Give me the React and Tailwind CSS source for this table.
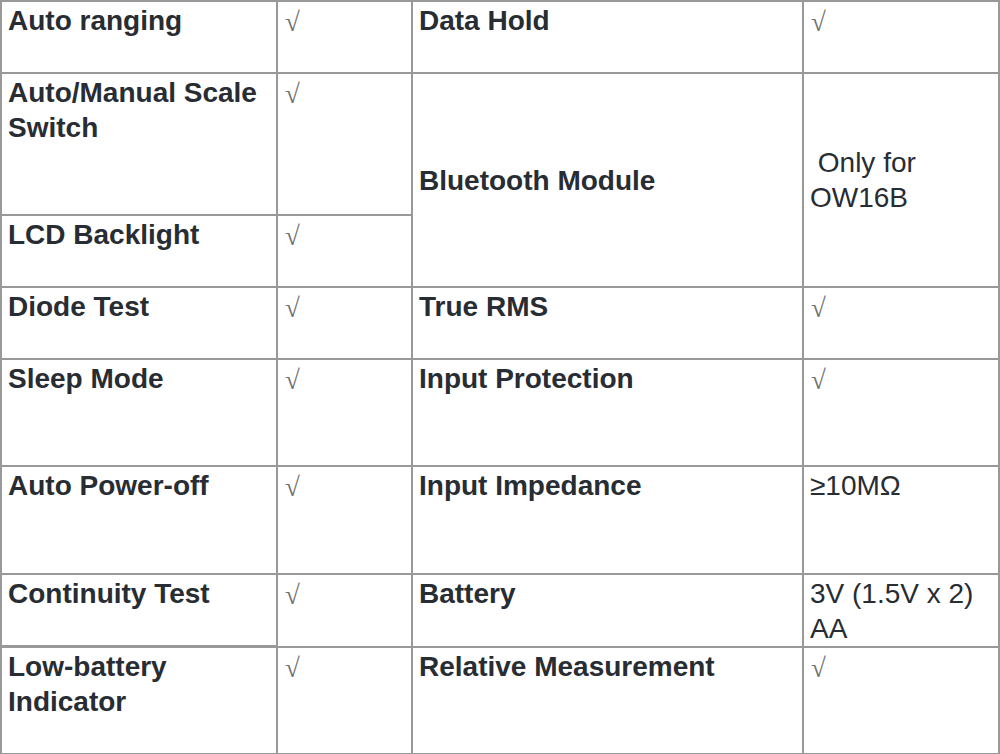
import React from 'react';

const rows = [
    { a: 'Auto ranging', b: '√', c: 'Data Hold', d: '√', h: 'h-[70px]' },
    { a: 'Auto/Manual Scale Switch', b: '√', h: 'h-[140px]' },
    { a: 'LCD Backlight', b: '√', h: 'h-[70px]' },
    { a: 'Diode Test', b: '√', c: 'True RMS', d: '√', h: 'h-[70px]' },
    { a: 'Sleep Mode', b: '√', c: 'Input Protection', d: '√', h: 'h-[105px]' },
    { a: 'Auto Power-off', b: '√', c: 'Input Impedance', d: '≥10MΩ', h: 'h-[106px]' },
    { a: 'Continuity Test', b: '√', c: 'Battery', d: '3V (1.5V x 2) AA', h: 'h-[70px]' },
    { a: 'Low-battery Indicator', b: '√', c: 'Relative Measurement', d: '√', h: 'h-[105px]' },
];

const Label = ({ children }) => (
    <div className="bg-white pl-[6px] pr-2 pt-[1px] font-bold">{children}</div>
);

const Value = ({ children }) => {
    if (children === '√') {
        return (
            <div className="bg-white pl-[7px] pt-[2px]">
                <span
                    className="text-[27px] leading-[30px] text-[#707070]"
                    style={{ fontFamily: '"Liberation Serif", serif' }}
                >
                    √
                </span>
            </div>
        );
    }
    return <div className="bg-white pl-[6px] pr-2 pt-[1px]">{children}</div>;
};

const App = () => {
    return (
        <main className="w-[1000px] h-[754px] bg-white">
            {/* Spec table */}
            <div
                className="grid grid-cols-[274px_133px_389px_194px] gap-[2px] p-[2px] bg-[#999999] text-[28px] leading-[35px] text-[#282c33]"
                style={{ fontFamily: '"Liberation Sans", Arial, sans-serif' }}
            >
                {/* row 1 */}
                <div className={`${rows[0].h} bg-white pl-[6px] pt-[1px] font-bold`}>{rows[0].a}</div>
                <Value>{rows[0].b}</Value>
                <Label>{rows[0].c}</Label>
                <Value>{rows[0].d}</Value>

                {/* rows 2-3 with spanning cells */}
                <div className={`${rows[1].h} bg-white pl-[6px] pr-2 pt-[1px] font-bold`}>{rows[1].a}</div>
                <Value>{rows[1].b}</Value>
                <div className="row-span-2 bg-white pl-[6px] flex items-center font-bold">Bluetooth Module</div>
                <div className="row-span-2 bg-white pl-[6px] pr-2 flex items-center">
                    <span>&nbsp;Only for<br />OW16B</span>
                </div>
                <div className={`${rows[2].h} bg-white pl-[6px] pt-[1px] font-bold`}>{rows[2].a}</div>
                <Value>{rows[2].b}</Value>

                {/* remaining rows */}
                {rows.slice(3).map((r) => (
                    <div key={r.a} className="contents">
                        <div className={`${r.h} bg-white pl-[6px] pr-2 pt-[1px] font-bold`}>{r.a}</div>
                        <Value>{r.b}</Value>
                        <div className="bg-white pl-[6px] pt-[1px] font-bold">{r.c}</div>
                        <Value>{r.d}</Value>
                    </div>
                ))}
            </div>
        </main>
    );
};

export default App;
